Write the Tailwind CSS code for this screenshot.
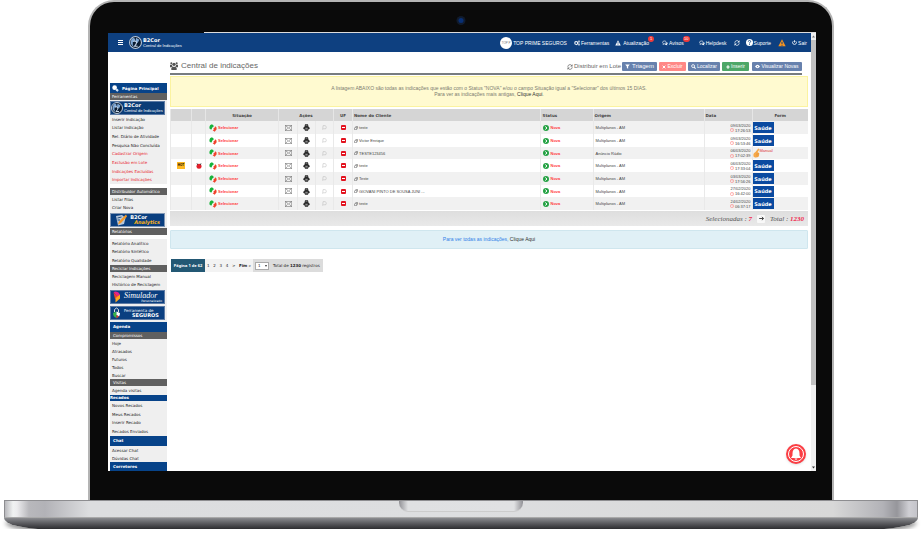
<!DOCTYPE html>
<html lang="pt-BR">
<head>
<meta charset="utf-8">
<title>B2Cor - Central de Indicações</title>
<script src="https://cdn.jsdelivr.net/npm/@tailwindcss/browser@4"></script>
</head>
<body class="bg-white overflow-x-hidden font-['Liberation_Sans',sans-serif] text-[4px] leading-[5px] text-[#444]">
<svg class="hidden" aria-hidden="true">
  <symbol id="i-globe" viewBox="0 0 24 24"><circle cx="12" cy="12" r="11" fill="#0b1d33" stroke="#b9c6d6" stroke-width="2"/><path d="M5 5q5-3 6 1t-4 5q-1 5 2 9-6-3-6-9zM13 3l6 4-3 6-4-3z" fill="#7fa8d6"/><path d="M8 10q5-2 6 2 0 3-4 7h6" stroke="#c9d8ea" stroke-width="2" fill="none"/></symbol>
  <symbol id="i-cogs" viewBox="0 0 24 24"><circle cx="9" cy="12" r="6" fill="none" stroke="currentColor" stroke-width="5" stroke-dasharray="4 1"/><circle cx="20" cy="6" r="3" fill="none" stroke="currentColor" stroke-width="3"/><circle cx="20" cy="18" r="3" fill="none" stroke="currentColor" stroke-width="3"/></symbol>
  <symbol id="i-warn" viewBox="0 0 24 24"><path fill="currentColor" fill-rule="evenodd" d="M12 1l11 21H1zM10.500 8v7h3V8zm0 9v3h3v-3z"/></symbol>
  <symbol id="i-chat" viewBox="0 0 24 24"><path d="M9 4c10-1 10 11 0 11l-5 3 1-4C0 11 2 4 9 4z" fill="none" stroke="currentColor" stroke-width="2.500"/><path d="M19 8q7 5 1 10l1 4-5-3q-4 0-6-2 9 0 9-9z" fill="currentColor"/></symbol>
  <symbol id="i-sync" viewBox="0 0 24 24"><path d="M3 11a9 9 0 0 1 16-5M21 13a9 9 0 0 1-16 5" fill="none" stroke="currentColor" stroke-width="3"/><path d="M22 1v9h-9zM2 23v-9h9z" fill="currentColor"/></symbol>
  <symbol id="i-help" viewBox="0 0 24 24"><circle cx="12" cy="12" r="12" fill="#fff"/><path d="M8 9q0-4 4-4t4 4q0 2-4 4v2M12 17v3" fill="none" stroke="#0e4080" stroke-width="3"/></symbol>
  <symbol id="i-power" viewBox="0 0 24 24"><path d="M6 6a9 9 0 1 0 12 0M12 1v11" fill="none" stroke="currentColor" stroke-width="4"/></symbol>
  <symbol id="i-users" viewBox="0 0 24 24"><circle cx="4" cy="4" r="3"/><circle cx="20" cy="4" r="3"/><circle cx="12" cy="7" r="5"/><path d="M0 8h6v3l3 2-5 3H0zM18 8h6v8h-4l-5-3 3-2zM4 24v-6q2-4 8-4t8 4v6z"/></symbol>
  <symbol id="i-filter" viewBox="0 0 24 24"><path fill="currentColor" d="M1 2h22l-8 10v11l-6-4v-7z"/></symbol>
  <symbol id="i-x" viewBox="0 0 24 24"><path d="M4 4l16 16M20 4L4 20" stroke="currentColor" stroke-width="6"/></symbol>
  <symbol id="i-search" viewBox="0 0 24 24"><circle cx="10" cy="10" r="7" fill="none" stroke="currentColor" stroke-width="4"/><path d="M15 15l7 7" stroke="currentColor" stroke-width="5"/></symbol>
  <symbol id="i-plus" viewBox="0 0 24 24"><path d="M12 2v20M2 12h20" stroke="currentColor" stroke-width="7"/></symbol>
  <symbol id="i-eye" viewBox="0 0 24 24"><path d="M0 12q12-16 24 0-12 16-24 0z" fill="currentColor"/><circle cx="12" cy="12" r="3" fill="#6781ad"/></symbol>
  <symbol id="i-swap" viewBox="0 0 24 24"><path d="M9 1l6 5-5 5v4q-6 3-9-2 0-7 3-10z" fill="#17b33a"/><path d="M18 7q6 2 5 9l-6 7-6-4 4-3-2-4 4-1z" fill="#f0432c"/><path d="M12 10l-4 5 4 2z" fill="#fff"/></symbol>
  <symbol id="i-mail" viewBox="0 0 24 20"><path d="M1 1h22v18H1zM1 1l11 9 11-9M1 19l8-8M23 19l-8-8" fill="none" stroke="#666" stroke-width="2"/></symbol>
  <symbol id="i-print" viewBox="0 0 24 24"><path d="M7 1h10l2 8q5 1 4 8l-4 1-2 5H7l-2-5-4-1q-1-7 4-8z" fill="#2a2a2a"/><path d="M8 13h8v6H8z" fill="#8a8a8a"/><path d="M9 5h6" stroke="#999" stroke-width="2"/></symbol>
  <symbol id="i-bubble" viewBox="0 0 24 24"><path d="M5 3h11l5 7-3 8H8l-5 3 1-7z" fill="none" stroke="#aaa" stroke-width="2"/></symbol>
  <symbol id="i-clip" viewBox="0 0 24 24"><path d="M6 8h10v14H3V12zM9 7l3-5h9v12l-4 3" fill="none" stroke="#555" stroke-width="3"/></symbol>
  <symbol id="i-play" viewBox="0 0 24 24"><circle cx="12" cy="12" r="12" fill="#25a244"/><path d="M9 6l7 6-7 6" fill="none" stroke="#fff" stroke-width="4"/></symbol>
  <symbol id="i-clock" viewBox="0 0 24 24"><circle cx="12" cy="12" r="10" fill="none" stroke="#f66" stroke-width="2.500"/><path d="M12 6v7h4" fill="none" stroke="#f66" stroke-width="2"/></symbol>
  <symbol id="i-hand" viewBox="0 0 20 28"><path d="M15 1q4 0 2 5l-4 6 5 2-1 9q-5 5-11 4-6-1-5-8 0-5 6-8z" fill="#f6a94b"/><path d="M10 14l7 2M9 18l7 1M9 22l6 1" stroke="#d5812b" stroke-width="1"/></symbol>
</svg>

<!-- Laptop lid -->
<div class="relative mx-[88px] rounded-t-[26px] border-x-2 border-t-2 border-[#b4b4b4] bg-[#0a0a0a] pt-[31px] pb-[29px] pl-[18px] pr-[16px]">
  <div class="absolute left-1/2 top-[14px] size-[9px] -translate-x-1/2 rounded-full bg-[#111b2c] flex items-center justify-center"><span class="size-[5px] rounded-full bg-[#082f74]"></span></div>
  <div class="absolute left-[114px] right-[16px] top-[30px] h-px bg-[#ddd]"></div>

  <!-- Screen -->
  <div class="relative flex bg-white">
    <div class="flex-1 min-w-0">
      <header class="flex h-[19px] items-center bg-[#0e4080] pl-[10px] pr-[4px] text-[5px] leading-[6px] text-white">
        <button aria-label="Menu" class="flex h-[5px] w-[5px] flex-col justify-between"><i class="h-px w-full bg-white"></i><i class="h-px w-full bg-white"></i><i class="h-px w-full bg-white"></i></button>
        <svg class="ml-[6px] size-[13px]"><use href="#i-globe"/></svg>
        <div class="ml-px"><b class="block font-['DejaVu_Sans',sans-serif] text-[5px] leading-[5px]">B2Cor</b><span class="block text-[4px] leading-[5px]">Central de Indicações</span></div>
        <nav class="ml-auto flex items-center whitespace-nowrap">
          <span class="mr-px flex size-[12px] items-center justify-center rounded-full bg-white text-[3px] text-[#777]">TOP P</span>
          <span>TOP PRIME SEGUROS</span>
          <a href="#" class="ml-[7px] flex items-center gap-px"><svg class="size-[6px]"><use href="#i-cogs"/></svg>Ferramentas</a>
          <a href="#" class="relative ml-[6px] flex items-center gap-[2px]"><svg class="size-[6px]"><use href="#i-warn"/></svg>Atualização<span class="absolute -right-[5px] -top-[4px] size-[6px] rounded-full bg-[#ef3b3b] text-center text-[4px]">1</span></a>
          <a href="#" class="relative ml-[13px] flex items-center gap-px"><svg class="size-[6px]"><use href="#i-chat"/></svg>Avisos<span class="absolute -right-[6px] -top-[4px] h-[6px] w-[7px] rounded-full bg-[#ef3b3b] text-center text-[4px]">10</span></a>
          <a href="#" class="ml-[15px] flex items-center gap-px"><svg class="size-[6px]"><use href="#i-chat"/></svg>Helpdesk</a>
          <a href="#" aria-label="Atualizar" class="ml-[7px]"><svg class="size-[6px]"><use href="#i-sync"/></svg></a>
          <a href="#" class="ml-[6px] flex items-center gap-px"><svg class="size-[7px]"><use href="#i-help"/></svg>Suporte</a>
          <a href="#" aria-label="Alerta" class="ml-[7px] text-[#f7931e]"><svg class="size-[8px]"><use href="#i-warn"/></svg></a>
          <a href="#" class="ml-[6px] flex items-center gap-px"><svg class="size-[5px]"><use href="#i-power"/></svg>Sair</a>
        </nav>
      </header>

      <div class="flex">
        <!-- Sidebar -->
        <aside class="ml-[2px] w-[57px] shrink-0 whitespace-nowrap bg-[#efefef] font-['DejaVu_Sans',sans-serif] text-[4px] leading-[5px] text-[#222]">
          <div class="h-[31px] bg-white"></div>
          <a href="#" class="flex h-[10px] items-center gap-[3px] bg-[#074389] pl-[2px] font-bold text-white"><svg class="size-[7px]" viewBox="0 0 24 24"><circle cx="9" cy="9" r="8" fill="#fff"/><path d="M13 14l6-1 4 5-4 5-6-3z" fill="#cfe0f5"/></svg>Página Principal</a>
          <h2 class="h-[7px] bg-[#606060] pl-[2px] leading-[7px] text-white">Ferramentas</h2>
          <div class="h-[15px] pt-px"><a href="#" class="flex h-[14px] w-[55px] items-center gap-px border border-[#5d7ba5] bg-[#0c3d78] text-white"><svg class="size-[12px] shrink-0"><use href="#i-globe"/></svg><span class="font-['Liberation_Sans',sans-serif]"><b class="block font-['DejaVu_Sans',sans-serif] text-[5px]">B2Cor</b>Central de Indicações</span></a></div>
          <ul class="grid h-[69px] auto-rows-fr items-center pl-[2px]">
            <li><a href="#">Inserir Indicação</a></li><li><a href="#">Listar Indicação</a></li><li><a href="#">Rel. Diário de Atividade</a></li><li><a href="#">Pesquisa Não Concluída</a></li>
            <li class="text-[#e8242c]"><a href="#">Cadastrar Origem</a></li><li class="text-[#e8242c]"><a href="#">Exclusão em Lote</a></li><li class="text-[#e8242c]"><a href="#">Indicações Excluídas</a></li><li class="text-[#e8242c]"><a href="#">Importar Indicações</a></li>
          </ul>
          <div class="h-[4px] bg-white"></div>
          <h2 class="h-[7px] bg-[#606060] pl-[2px] leading-[7px] text-white">Distribuidor Automático</h2>
          <ul class="grid h-[17px] auto-rows-fr items-center pl-[2px]"><li><a href="#">Listar Filas</a></li><li><a href="#">Criar Nova</a></li></ul>
          <div class="h-[16px] pt-px"><a href="#" class="flex h-[14px] w-[55px] items-center justify-between border border-[#7f96b5] bg-[#0a3f80] px-[4px] font-bold text-white"><svg class="size-[12px]" viewBox="0 0 24 24"><path d="M2 4l12-2 7 6-3 12-12 3z" fill="#b8c7da"/><path d="M22 1L8 15l-2 6 6-3L24 5z" fill="#f39a2b"/><path d="M5 8l8-2M5 12h5" stroke="#25507f" stroke-width="2"/></svg><span class="text-[5px] leading-[5px]">B2Cor<br><i class="pl-[4px] text-[#ffb515]">Analytics</i></span></a></div>
          <h2 class="h-[7px] bg-[#606060] pl-[2px] leading-[7px] text-white">Relatórios</h2>
          <div class="h-[4px] bg-white"></div>
          <ul class="grid h-[26px] auto-rows-fr items-center pl-[2px]"><li><a href="#">Relatório Analítico</a></li><li><a href="#">Relatório Sintético</a></li><li><a href="#">Relatório Qualidade</a></li></ul>
          <h2 class="h-[7px] bg-[#606060] pl-[2px] leading-[7px] text-white">Reciclar Indicações</h2>
          <ul class="grid h-[17px] auto-rows-fr items-center pl-[2px]"><li><a href="#">Reciclagem Manual</a></li><li><a href="#">Histórico de Reciclagem</a></li></ul>
          <div class="flex h-[33px] flex-col gap-[2px] pt-px">
            <a href="#" class="flex h-[14px] w-[55px] items-center gap-[3px] border border-[#5d7ba5] bg-[#0a3f80] px-[2px] text-white"><svg class="h-[12px] w-[8px] shrink-0" viewBox="0 0 16 24"><path d="M1 2q9-3 13 5l-5 5z" fill="#e6228b"/><path d="M1 3l9 8-6 5z" fill="#f0412e"/><path d="M14 7v8l-9 8V14z" fill="#ffa51e"/></svg><span class="flex flex-1 flex-col"><i class="font-['Liberation_Serif',serif] text-[8px] leading-[9px]">Simulador</i><span class="text-right text-[3px] leading-[3px]">Personalizado</span></span></a>
            <a href="#" class="flex h-[14px] w-[55px] items-center gap-[4px] border border-[#5d7ba5] bg-[#0a3f80] px-[2px] text-white"><svg class="h-[12px] w-[7px]" viewBox="0 0 14 24"><path d="M3 10V5q4-6 8 0v5" fill="none" stroke="#ddd" stroke-width="2"/><path d="M0 12l7-3v13q-7-2-7-10z" fill="#37b34a"/><path d="M7 9l7 3q0 4-2 7l-5-3z" fill="#fff"/><path d="M7 16l5 3-5 4z" fill="#e43c2f"/></svg><span>Ferramenta de<b class="block pl-[8px] text-[5px]">SEGUROS</b></span></a>
          </div>
          <h2 class="h-[10px] bg-[#074389] pl-[3px] font-bold leading-[10px] text-white">Agenda</h2>
          <h3 class="h-[7px] bg-[#606060] pl-[3px] leading-[7px] text-white">Compromissos</h3>
          <ul class="grid h-[40px] auto-rows-fr items-center pl-[2px]"><li><a href="#">Hoje</a></li><li><a href="#">Atrasados</a></li><li><a href="#">Futuros</a></li><li><a href="#">Todos</a></li><li><a href="#">Buscar</a></li></ul>
          <h3 class="h-[7px] bg-[#606060] pl-[3px] leading-[7px] text-white">Visitas</h3>
          <ul class="grid h-[9px] items-center pl-[2px]"><li><a href="#">Agenda visitas</a></li></ul>
          <h2 class="h-[6px] bg-[#074389] font-bold leading-[6px] text-white">Recados</h2>
          <ul class="grid h-[35px] auto-rows-fr items-center pl-[2px]"><li><a href="#">Novos Recados</a></li><li><a href="#">Meus Recados</a></li><li><a href="#">Inserir Recado</a></li><li><a href="#">Recados Enviados</a></li></ul>
          <h2 class="h-[10px] bg-[#074389] pl-[3px] font-bold leading-[10px] text-white">Chat</h2>
          <ul class="grid h-[16px] auto-rows-fr items-center pl-[2px]"><li><a href="#">Acessar Chat</a></li><li><a href="#">Dúvidas Chat</a></li></ul>
          <h2 class="h-[9px] bg-[#074389] pl-[3px] font-bold leading-[9px] text-white">Corretores</h2>
        </aside>

        <!-- Content -->
        <main class="min-w-0 flex-1 px-[3px]">
          <div class="mr-[6px] flex h-[23px] items-end border-b-2 border-[#777c80] pb-[2px]">
            <h1 class="flex items-center gap-[3px] text-[8px] leading-[10px] text-[#666]"><svg class="size-[8px] fill-[#555]"><use href="#i-users"/></svg>Central de indicações</h1>
            <div class="ml-auto flex items-center whitespace-nowrap text-[5px] leading-[9px] text-white">
              <a href="#" class="mr-px flex items-center gap-px text-[6px] text-[#666]"><svg class="size-[6px]"><use href="#i-sync"/></svg>Distribuir em Lote</a>
              <button class="flex h-[9px] w-[35px] items-center justify-center gap-[2px] rounded-[1px] bg-[#6781ad] text-[6px]"><svg class="size-[5px]"><use href="#i-filter"/></svg>Triagem</button>
              <button class="ml-[2px] flex h-[9px] w-[27px] items-center justify-center gap-px rounded-[1px] bg-[#ff8886]"><svg class="size-[4px]"><use href="#i-x"/></svg>Excluir</button>
              <button class="ml-[2px] flex h-[9px] w-[32px] items-center justify-center gap-px rounded-[1px] bg-[#6781ad]"><svg class="size-[5px]"><use href="#i-search"/></svg>Localizar</button>
              <button class="ml-[2px] flex h-[9px] w-[27px] items-center justify-center gap-px rounded-[1px] bg-[#4da768]"><svg class="size-[4px]"><use href="#i-plus"/></svg>Inserir</button>
              <button class="ml-[3px] flex h-[9px] w-[50px] items-center justify-center gap-px rounded-[1px] bg-[#6781ad]"><svg class="size-[5px]"><use href="#i-eye"/></svg>Visualizar Novas</button>
            </div>
          </div>
          <p class="mt-px flex h-[31px] flex-col justify-center border border-[#fbf3a0] bg-[#fffad0] pb-px text-center text-[5px] leading-[6px] text-[#7c7c70]"><span>A listagem ABAIXO são todas as indicações que estão com o Status "NOVA" e/ou o campo Situação igual a "Selecionar" dos últimos 15 DIAS.</span><span>Para ver as indicações mais antigas, <a href="#" class="text-[#333]">Clique Aqui</a>.</span></p>

          <table class="mt-[2px] w-full table-fixed border-collapse whitespace-nowrap">
            <colgroup><col class="w-[21px]"><col class="w-[14px]"><col class="w-[73px]"><col class="w-[19px]"><col class="w-[18px]"><col class="w-[18px]"><col class="w-[19px]"><col><col class="w-[53px]"><col class="w-[111px]"><col class="w-[48px]"><col class="w-[56px]"></colgroup>
            <thead class="font-['DejaVu_Sans',sans-serif] font-bold text-[#444]">
              <tr class="h-[12px] bg-[#d5d5d5] *:border-l *:border-[#e6e6e6] *:p-0">
                <th></th><th></th><th>Situação</th><th colspan="3">Ações</th><th>UF</th><th class="text-left"><span class="pl-px">Nome do Cliente</span></th><th class="text-left"><span class="pl-[2px]">Status</span></th><th class="text-left"><span class="pl-px">Origem</span></th><th class="text-left"><span class="pl-px">Data</span></th><th>Form</th>
              </tr>
            </thead>
            <tbody id="rows"></tbody>
          </table>

          <div class="mt-px flex h-[15px] items-center justify-end gap-[5px] bg-linear-to-b from-[#dedede] to-[#e9e9e9] pr-[4px] font-['Liberation_Serif',serif] text-[7px] italic leading-[8px] text-[#555]">
            <span>Selecionadas : <b class="text-[#f0284c]">7</b></span>
            <button aria-label="Avançar" class="flex size-[8px] items-center justify-center rounded-[1px] bg-[#f8f8f8]"><svg class="size-[5px]" viewBox="0 0 24 24"><path d="M1 12h20M14 4l8 8-8 8" fill="none" stroke="#222" stroke-width="4"/></svg></button>
            <span>Total : <b class="text-[#f0284c]">1230</b></span>
          </div>

          <p class="mt-[4px] h-[19px] rounded-[1px] border border-[#cfe6ee] bg-[#e0f0f6] text-center text-[5px] leading-[17px] text-[#2f80e8]">Para ver todas as indicações, <a href="#" class="text-[#333]">Clique Aqui</a></p>

          <nav class="ml-px mt-[10px] flex h-[13px] w-fit items-center bg-[#dcdcdc] pr-[3px] font-['DejaVu_Sans',sans-serif] leading-[13px] text-[#222]">
            <b class="w-[34px] bg-[#235874] text-center font-['Noto_Sans',sans-serif] text-white">Página 1 de 62</b>
            <span class="flex w-[48px] justify-between bg-[#f3f3f3] px-[2px]"><a href="#">1</a><a href="#">2</a><a href="#">3</a><a href="#">4</a><a href="#">&gt;</a><a href="#"><b>Fim</b> »</a></span>
            <label for="pg" class="sr-only">Página</label>
            <span class="relative ml-[2px] mr-[4px] flex h-[8px] items-center"><select id="pg" class="h-[8px] w-[14px] appearance-none border border-[#aaa] bg-white pl-[2px] text-[4px] leading-[5px]"><option>1</option><option>2</option></select><svg class="pointer-events-none absolute right-[2px] size-[2px]" viewBox="0 0 4 4"><path d="M0 0h4L2 4z" fill="#333"/></svg></span>
            <span>Total de <b>1230</b> registros</span>
          </nav>
        </main>
      </div>
    </div>

    <!-- Scrollbar -->
    <div class="flex w-[5px] shrink-0 flex-col items-center bg-[#f1f1f1]">
      <svg class="my-[2px] h-[3px] w-[3px]" viewBox="0 0 6 6"><path d="M0 5h6L3 1z" fill="#777"/></svg>
      <div class="w-full flex-[346] bg-[#c1c1c1]"></div><div class="flex-[79]"></div>
      <svg class="my-[2px] h-[3px] w-[3px]" viewBox="0 0 6 6"><path d="M0 1h6L3 5z" fill="#333"/></svg>
    </div>

    <button aria-label="Notificações" class="absolute bottom-[7px] right-[10px] flex size-[20px] items-center justify-center rounded-full bg-[#fb3e44] shadow-sm"><svg class="size-[18px]" viewBox="0 0 36 36"><circle cx="18" cy="18" r="15" fill="none" stroke="#fff" stroke-width="2"/><path d="M18 7q-7 1-7 10v4l-3 5h20l-3-5v-4q0-9-7-10zM15 27q3 5 6 0z" fill="#fff"/></svg></button>
  </div>
</div>

<!-- Laptop base -->
<div class="mx-[4px]">
  <div class="h-[18px] border-x border-t border-[#8d8d90] border-b border-b-[#aaa] bg-[linear-gradient(90deg,#b8b8bc_0,#f0f2f2_8px,#ececee_12px,#b8b8bc_24px,#b2b2b7_40px,#dcdddf_84px,#dddee0_50%,#d8d8d8_calc(100%-84px),#b2b2b7_calc(100%-34px),#96969b_calc(100%-20px),#cfcfd4_calc(100%-8px),#c4c4ca_100%)]">
    <div class="mx-auto h-[11px] w-[124px] rounded-b-[9px] border-b border-[#ccc] bg-[linear-gradient(90deg,#919196_0,#dfe0e2_9px,#e0e1e3_calc(100%-9px),#919196_100%)]"></div>
  </div>
  <div class="h-[11px] rounded-b-[42px_11px] bg-linear-to-b from-[#8b8c90] to-[#2d2d30] shadow-[0_3px_4px_-1px_rgba(0,0,0,0.45)]"></div>
</div>

<script>
const rows = [
  ['teste', 'Multiplanos - AM', '09/03/2020', '17:26:53', 'h-[13px]'],
  ['Victor Enrique', 'Multiplanos - AM', '09/03/2020', '16:53:46', 'h-[13px]'],
  ['TESTE123456', 'Anúncio Rádio', '06/03/2020', '17:02:39', 'h-[12px]'],
  ['teste', 'Multiplanos - AM', '06/03/2020', '17:33:04', 'h-[13px]'],
  ['Teste', 'Multiplanos - AM', '03/03/2020', '17:56:26', 'h-[13px]'],
  ['GIOVANI PINTO DE SOUSA JUNI ...', 'Multiplanos - AM', '27/02/2020', '16:42:00', 'h-[12px]'],
  ['teste', 'Multiplanos - AM', '24/02/2020', '06:37:17', 'h-[13px]'],
];
document.getElementById('rows').innerHTML = rows.map(([name, origin, date, time, height], i) => `
<tr class="${height} ${i % 2 ? 'bg-white' : 'bg-[#f1f1f1]'} *:border-l *:border-[#e9e9e9] *:p-0">
  <td>${i === 3 ? '<span class="mx-auto block h-[7px] w-[8px] bg-[#fdb822] text-center text-[3px] font-bold leading-[7px] text-black">HOT</span>' : ''}</td>
  <td>${i === 3 ? '<svg class="mx-auto size-[6px]" viewBox="0 0 24 24"><circle cx="12" cy="13" r="10" fill="#e3202b"/><path d="M3 3l5 3M21 3l-5 3" stroke="#333" stroke-width="4"/></svg>' : ''}</td>
  <td><a href="#" class="flex items-center gap-px pl-[3px] font-bold text-[#ff3b3b]"><svg class="size-[8px]"><use href="#i-swap"/></svg>Selecionar</a></td>
  <td><svg class="mx-auto h-[6px] w-[7px]"><use href="#i-mail"/></svg></td>
  <td><svg class="mx-auto size-[7px]"><use href="#i-print"/></svg></td>
  <td><svg class="mx-auto size-[5px]"><use href="#i-bubble"/></svg></td>
  <td><span class="mx-auto flex size-[5px] items-center rounded-[1px] bg-[#e3131f]"><i class="mx-px h-px flex-1 bg-white"></i></span></td>
  <td><a href="#" class="flex items-center gap-px pl-px"><svg class="size-[4px]"><use href="#i-clip"/></svg>${name}</a></td>
  <td><span class="flex items-center gap-[2px] pl-[2px] font-bold text-[#ff3b3b]"><svg class="size-[6px]"><use href="#i-play"/></svg>Nova</span></td>
  <td><span class="pl-[2px]">${origin}</span></td>
  <td class="text-right"><span class="block pr-px">${date}</span><span class="flex items-center justify-end gap-px pr-px"><svg class="size-[4px]"><use href="#i-clock"/></svg>${time}</span></td>
  <td>${i === 2
    ? '<a href="#" class="flex text-[#d33]"><svg class="h-[10px] w-[7px]"><use href="#i-hand"/></svg><span class="text-[4px] leading-[5px]">Manual</span></a>'
    : `<button class="block h-[11px] w-[21px] bg-[#0a4aa0] text-center font-['DejaVu_Sans',sans-serif] text-[5px] font-bold leading-[10px] text-white">Saúde</button>`}</td>
</tr>`).join('');
</script>
</body>
</html>
